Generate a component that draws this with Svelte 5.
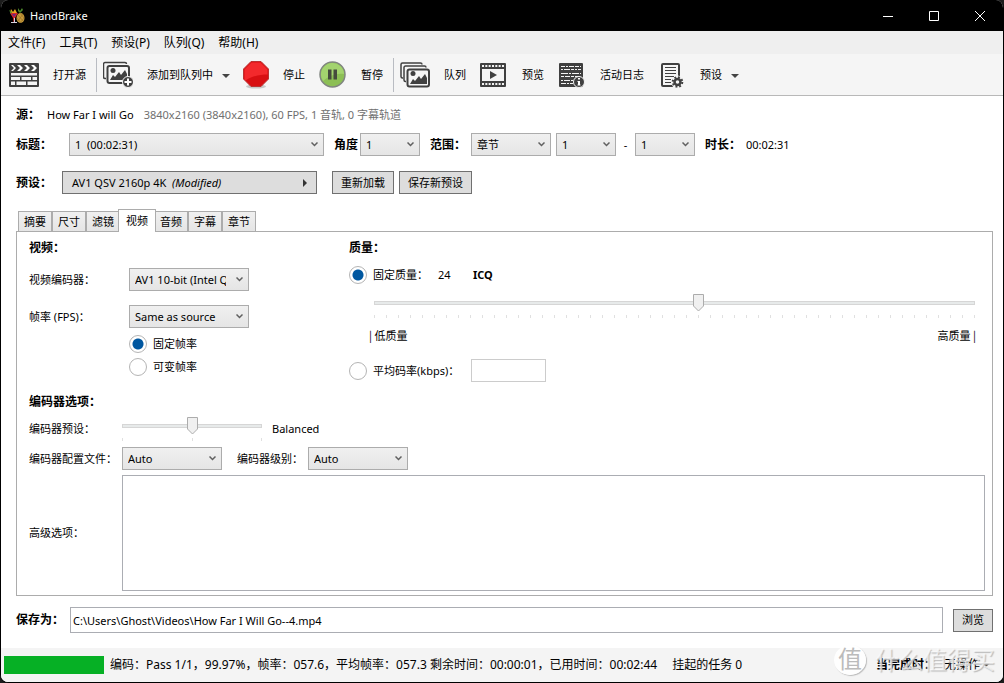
<script>
  const menus = ["文件(F)", "工具(T)", "预设(P)", "队列(Q)", "帮助(H)"];
  const tabs = ["摘要", "尺寸", "滤镜", "视频", "音频", "字幕", "章节"];

  let activeTab = $state("视频");
  let quality = $state(27);
  let speed = $state(1);
  let rateMode = $state("constant");
  let qualityMode = $state("constant");
  let bitrate = $state("");
  let options = $state("");
  let target = $state("C:\\Users\\Ghost\\Videos\\How Far I Will Go--4.mp4");
  let progress = $state(100);
</script>

{#snippet caret()}
  <svg class="caret" width="8" height="4" viewBox="0 0 8 4"><path d="M0 0h8L4 4z" fill="#444" /></svg>
{/snippet}

{#snippet ticks(count)}
  <div class="ticks">
    {#each { length: count } as _, i (i)}<i></i>{/each}
  </div>
{/snippet}

<div class="window">
  <header class="titlebar">
    <svg width="16" height="16" viewBox="0 0 16 16">
      <path d="M1 5h8L6 10 5.500 14H4.500L4 10z" fill="#d5262b" />
      <path d="M1 5 2 1l2 3 2-3 2 4z" fill="#e8a322" />
      <path d="M0 2l3 2-1 2zM9 0l2 3 2-3 1 2-3 3-2-2z" fill="#4d8a2b" />
      <path d="M2 14h6v1H2zM5 10h1v4H5z" fill="#d7d2e0" />
      <path d="M3 6h4L5 9z" fill="#6d2a83" />
      <ellipse cx="11.500" cy="10" rx="4" ry="5" fill="#c79a3a" />
      <path d="M9 7l5 6M8 10l4 5M11 5l4 5M14 6l-5 7M15 10l-4 5" stroke="#8a6522" stroke-width=".5" />
    </svg>
    <h1>HandBrake</h1>
    <button aria-label="最小化"><svg width="10" height="10"><path d="M0 5.500h10" stroke="#fff" /></svg></button>
    <button aria-label="最大化"><svg width="10" height="10"><path d="M.5.500h9v9h-9z" stroke="#fff" fill="none" /></svg></button>
    <button aria-label="关闭"><svg width="10" height="10"><path d="M0 0l10 10M10 0L0 10" stroke="#fff" /></svg></button>
  </header>

  <nav class="menubar">
    {#each menus as menu}<button>{menu}</button>{/each}
  </nav>

  <div class="toolbar">
    <div class="group">
      <button>
        <svg width="30" height="28" viewBox="0 0 30 28">
          <rect y="2" width="30" height="24" rx="1" fill="#404040" />
          <path d="M2 4h2l3 3-3 3H2l3-3zM8 4h3l3 3-3 3H8l3-3zM15 4h3l3 3-3 3h-3l3-3zM22 4h3l3 3-3 3h-3l3-3z" fill="#fff" />
          <path d="M2 12h26v2.500H2zM2 16h9v3H2zM12.500 16H22v3h-9.500zM23.500 16H28v3h-4.500zM2 20.500h4V24H2zM7.500 20.500H17V24H7.500zM18.500 20.500H28V24h-9.500z" fill="#f5f5f5" />
        </svg>
        <span>打开源</span>
      </button>
    </div>
    <div class="group">
      <button>
        <svg width="30" height="28" viewBox="0 0 30 28">
          <path d="M3 17.500H2a1.500 1.500 0 0 1-1.500-1.500V3A1.500 1.500 0 0 1 2 1.500h20A1.500 1.500 0 0 1 23.500 3" fill="none" stroke="#404040" stroke-width="1.500" />
          <rect x="4.500" y="5" width="21.500" height="17" rx="2" fill="#f5f5f5" stroke="#404040" stroke-width="2" />
          <circle cx="10" cy="9.500" r="2.500" fill="#404040" />
          <path d="M7 19l3-5 2 2 4-5 2 3 4-5 2 4v6z" fill="#404040" />
          <circle cx="25" cy="21" r="5.500" fill="#404040" stroke="#f5f5f5" />
          <path d="M25 17.500v7M21.500 21h7" stroke="#fff" stroke-width="2" />
        </svg>
        <span>添加到队列中{@render caret()}</span>
      </button>
      <button>
        <svg width="26" height="28" viewBox="0 0 26 28">
          <ellipse cx="13" cy="25.500" rx="10" ry="2" fill="#aaa" opacity=".6" />
          <path d="M8 .5h10l7.500 7.500v10L18 25.500H8L.5 18V8z" fill="#d80f12" stroke="#b33" />
          <path d="M8.500 1.500h9l7 7v5c-7 0-14 1-22 6l-1-1.500V8.500z" fill="#f3292c" />
        </svg>
        <span>停止</span>
      </button>
      <button>
        <svg width="29" height="28" viewBox="0 0 29 28">
          <circle cx="14.500" cy="13.500" r="12.500" fill="#8cbf55" stroke="#808580" stroke-width="1.500" />
          <path d="M3 14a11.500 11.500 0 0 1 23-1c-9-1-15 2-21 7a11 11 0 0 1-2-6z" fill="#a3d36f" />
          <path d="M10 8.500h3.500v10H10zM15.500 8.500H19v10h-3.500z" fill="#454b3d" />
        </svg>
        <span>暂停</span>
      </button>
    </div>
    <div class="group">
      <button>
        <svg width="30" height="28" viewBox="0 0 30 28">
          <path d="M3 17H2.500A1.500 1.500 0 0 1 1 15.500v-12A1.500 1.500 0 0 1 2.500 2h18A1.500 1.500 0 0 1 22 3.500" fill="none" stroke="#404040" stroke-width="1.500" />
          <path d="M6 20.500h-.5A1.500 1.500 0 0 1 4 19V6.500A1.500 1.500 0 0 1 5.500 5h19A1.500 1.500 0 0 1 26 6.500" fill="none" stroke="#404040" stroke-width="1.500" />
          <rect x="7.500" y="8.500" width="21.500" height="17" rx="2" fill="#f5f5f5" stroke="#404040" stroke-width="2" />
          <circle cx="13" cy="12.500" r="2.500" fill="#404040" />
          <path d="M10 23l3-5 2 2 4-5 2 3 4-5 2 4v6z" fill="#404040" />
        </svg>
        <span>队列</span>
      </button>
      <button>
        <svg width="29" height="28" viewBox="0 0 29 28">
          <rect x="1" y="2" width="26" height="24" rx="1" fill="#404040" />
          <path d="M3 8h22v12H3z" fill="#f5f5f5" />
          <path d="M3 5h22M3 23h22" stroke="#f5f5f5" stroke-width="2" stroke-dasharray="2 1.330" />
          <path d="M11 10l7 4-7 4z" fill="#404040" />
        </svg>
        <span>预览</span>
      </button>
      <button>
        <svg width="29" height="28" viewBox="0 0 29 28">
          <rect x="2" y="2" width="24" height="24" rx="1" fill="#404040" />
          <g stroke="#f5f5f5">
            <path d="M4 5.500h20" stroke-dasharray="4 1 2 1 5 1" />
            <path d="M4 8.500h20" stroke-dasharray="2 1 6 1 3 1" />
            <path d="M4 12.500h20" stroke-dasharray="7 1 2 1" />
            <path d="M4 15.500h20" stroke-dasharray="3 1 5 1" />
            <path d="M4 19.500h12" stroke-dasharray="2 1 6 1" />
            <path d="M4 22.500h12" stroke-dasharray="5 1 2 1" />
          </g>
          <circle cx="22" cy="21" r="5.500" fill="#404040" stroke="#f5f5f5" />
          <path d="M21 17h2v1.500h-2zM20.500 20H23v3.500h.5v1h-3v-1h.5V21h-.5z" fill="#fff" />
        </svg>
        <span>活动日志</span>
      </button>
      <button>
        <svg width="29" height="28" viewBox="0 0 29 28">
          <rect x="5" y="3" width="17" height="22" rx="1" fill="#f5f5f5" stroke="#404040" stroke-width="2" />
          <path d="M8 6.500h11M8 9.500h11M8 12.500h11M8 15.500h9M8 18.500h6M8 21.500h6" stroke="#404040" />
          <circle cx="20.500" cy="21" r="6.500" fill="#f5f5f5" />
          <circle cx="20.500" cy="21" r="3" fill="none" stroke="#404040" stroke-width="2.500" />
          <circle cx="20.500" cy="21" r="4.800" fill="none" stroke="#404040" stroke-width="2" stroke-dasharray="1.880 1.880" />
        </svg>
        <span>预设{@render caret()}</span>
      </button>
    </div>
  </div>

  <main>
    <div class="row source">
      <b>源：</b>
      <span>How Far I will Go</span>
      <span class="muted">3840x2160 (3840x2160), 60 FPS, 1 音轨, 0 字幕轨道</span>
    </div>

    <div class="row title-row">
      <label class="caption" for="title">标题：</label>
      <select id="title" class="wide"><option>1&nbsp; (00:02:31)</option></select>
      <label class="angle" for="angle">角度</label>
      <select id="angle" class="tiny"><option>1</option></select>
      <label class="range" for="range">范围：</label>
      <select id="range" class="short"><option>章节</option></select>
      <select class="tiny gap" aria-label="开始"><option>1</option></select>
      <span class="dash">-</span>
      <select class="tiny" aria-label="结束"><option>1</option></select>
      <b class="duration">时长：</b>
      <span>00:02:31</span>
    </div>

    <div class="row preset-row">
      <b class="caption">预设：</b>
      <button class="push preset">
        <span>AV1 QSV 2160p 4K&nbsp; <em>(Modified)</em></span>
        <svg width="4" height="8" viewBox="0 0 4 8"><path d="M0 0l4 4-4 4z" fill="#333" /></svg>
      </button>
      <button class="push reload">重新加载</button>
      <button class="push">保存新预设</button>
    </div>

    <div class="tabs" role="tablist">
      {#each tabs as tab}
        <button role="tab" aria-selected={tab === activeTab} class:active={tab === activeTab} onclick={() => (activeTab = tab)}>{tab}</button>
      {/each}
    </div>

    <section class="panel" role="tabpanel">
      <div class="columns">
        <div class="video">
          <h2>视频：</h2>
          <div class="field">
            <label for="encoder">视频编码器：</label>
            <select id="encoder"><option>AV1 10-bit (Intel QSV)</option></select>
          </div>
          <div class="field">
            <label for="fps">帧率 (FPS)：</label>
            <select id="fps"><option>Same as source</option></select>
          </div>
          <div class="radios">
            <label class="radio"><input type="radio" bind:group={rateMode} value="constant" />固定帧率</label>
            <label class="radio"><input type="radio" bind:group={rateMode} value="variable" />可变帧率</label>
          </div>
        </div>

        <div class="quality">
          <h2>质量：</h2>
          <div class="row constant">
            <label class="radio"><input type="radio" bind:group={qualityMode} value="constant" />固定质量：</label>
            <span class="rf">24</span>
            <b>ICQ</b>
          </div>
          <div class="slider">
            <input type="range" min="0" max="50" bind:value={quality} aria-label="质量" />
            {@render ticks(51)}
          </div>
          <div class="ends"><span>| 低质量</span><span>高质量 |</span></div>
          <div class="row">
            <label class="radio bitrate"><input type="radio" bind:group={qualityMode} value="average" />平均码率(kbps)：</label>
            <input class="kbps" type="text" bind:value={bitrate} aria-label="平均码率" />
          </div>
        </div>
      </div>

      <h2>编码器选项：</h2>
      <div class="row speed">
        <label class="side" for="speed">编码器预设：</label>
        <div class="slider">
          <input id="speed" type="range" min="0" max="2" bind:value={speed} />
          {@render ticks(3)}
        </div>
        <span>Balanced</span>
      </div>
      <div class="row profile">
        <label class="side" for="profile">编码器配置文件：</label>
        <select id="profile"><option>Auto</option></select>
        <label class="level" for="level">编码器级别：</label>
        <select id="level"><option>Auto</option></select>
      </div>
      <div class="row advanced">
        <label class="side" for="options">高级选项：</label>
        <textarea id="options" bind:value={options}></textarea>
      </div>
    </section>

    <div class="row save">
      <label for="target">保存为：</label>
      <input id="target" type="text" bind:value={target} />
      <button class="push browse">浏览</button>
    </div>
  </main>

  <footer class="status">
    <div class="progress"><div class="bar" style:width="{progress}%"></div></div>
    <span>编码：Pass 1/1，99.97%，帧率：057.6，平均帧率：057.3 剩余时间：00:00:01，已用时间：00:02:44</span>
    <span class="pending">挂起的任务 0</span>
    <b>当完成时：</b>
    <button class="done">无操作{@render caret()}</button>
  </footer>

  <div class="watermark"><span class="seal">值</span><span>什么值得买</span></div>
</div>

<style>
  :global(body) {
    margin: 0;
    background: #1c1c1c;
  }

  .window {
    position: relative;
    display: flex;
    flex-direction: column;
    box-sizing: border-box;
    min-height: 100vh;
    border: 1px solid #000;
    border-top: 0;
    border-radius: 8px;
    overflow: hidden;
    background: #fff;
    color: #000;
    font: 11px/16px "Noto Sans", "Noto Sans CJK SC", sans-serif;
    white-space: nowrap;
  }

  button, select, input, textarea {
    box-sizing: border-box;
    margin: 0;
    font: inherit;
    color: inherit;
    border-radius: 0;
  }

  button {
    padding: 0;
    border: 0;
    background: none;
  }

  svg {
    display: block;
    flex: none;
  }

  h1, h2 {
    margin: 0;
    font-size: 12px;
    line-height: 16px;
  }

  .row {
    display: flex;
    align-items: center;
  }

  .titlebar {
    display: flex;
    align-items: center;
    height: 31px;
    padding-left: 8px;
    background: #000;
    color: #fff;
  }

  .titlebar h1 {
    flex: 1;
    padding-left: 5px;
    font-size: 11px;
    font-weight: normal;
  }

  .titlebar button {
    display: flex;
    align-items: center;
    justify-content: center;
    width: 46px;
    height: 31px;
  }

  .menubar {
    display: flex;
    gap: 14px;
    height: 23px;
    padding-left: 7px;
    background: #efefef;
    font-size: 12px;
  }

  .toolbar {
    display: flex;
    align-items: center;
    height: 41px;
    border-bottom: 1px solid #b8b8b8;
    background: #f5f5f5;
  }

  .group {
    display: flex;
    gap: 13px;
    height: 34px;
    padding: 0 10px 0 6px;
  }

  .group:first-child {
    padding-left: 8px;
  }

  .group + .group {
    border-left: 1px solid #b9bcc2;
  }

  .group button {
    display: flex;
    align-items: center;
    gap: 14px;
  }

  .caret {
    display: inline-block;
    margin-left: 9px;
    vertical-align: middle;
  }

  main {
    flex: 1;
    display: flex;
    flex-direction: column;
    padding: 11px 10px 15px 15px;
  }

  .source b, .title-row label, .title-row b, .caption, .save label {
    font-size: 12px;
    font-weight: bold;
  }

  .source b {
    width: 31px;
  }

  .muted {
    margin-left: 10px;
    color: #707070;
  }

  select {
    appearance: none;
    height: 23px;
    padding: 0 22px 0 5px;
    border: 1px solid #acacac;
    background:
      url("data:image/svg+xml,%3Csvg xmlns='http://www.w3.org/2000/svg' width='7' height='5'%3E%3Cpath d='M.5.500l3 3 3-3' fill='none' stroke='%23606060' stroke-width='1.500'/%3E%3C/svg%3E") no-repeat right 5px top 8px,
      linear-gradient(#f0f0f0, #e5e5e5);
    text-overflow: clip;
  }

  .title-row {
    margin-top: 10px;
  }

  .caption {
    width: 53px;
  }

  .title-row select.wide {
    width: 255px;
  }

  .title-row .angle {
    width: 26px;
    margin-left: 10px;
  }

  .title-row .range {
    width: 41px;
    margin-left: 10px;
  }

  .short {
    width: 80px;
  }

  .tiny {
    width: 60px;
  }

  .gap {
    margin-left: 5px;
  }

  .dash {
    width: 19px;
    text-align: center;
  }

  .title-row .duration {
    width: 41px;
    margin-left: 10px;
  }

  .push {
    height: 23px;
    padding: 0 8px;
    border: 1px solid #707070;
    background: #ddd;
  }

  .preset-row {
    margin-top: 15px;
  }

  .preset-row .caption {
    width: 46px;
  }

  .preset {
    display: flex;
    align-items: center;
    justify-content: space-between;
    width: 255px;
    padding: 0 9px;
  }

  .reload {
    margin: 0 5px 0 15px;
  }

  .tabs {
    display: flex;
    align-items: flex-end;
    margin-top: 15px;
    padding-left: 2px;
  }

  .tabs button {
    width: 34px;
    height: 20px;
    border: 1px solid #acacac;
    border-width: 1px 1px 0 1px;
    background: linear-gradient(#f0f0f0, #e5e5e5);
  }

  .tabs button.active {
    position: relative;
    width: 38px;
    height: 23px;
    margin: 0 -2px -1px -2px;
    background: #fff;
  }

  .panel {
    flex: 1;
    display: flex;
    flex-direction: column;
    padding: 8px 7px 4px 12px;
    border: 1px solid #acacac;
  }

  .columns {
    display: grid;
    grid-template-columns: 320px 1fr;
    height: 154px;
  }

  .field {
    display: flex;
    align-items: center;
    margin-top: 12px;
  }

  .field + .field {
    margin-top: 14px;
  }

  .field label {
    width: 100px;
  }

  .field select {
    width: 120px;
  }

  .radios {
    display: grid;
    gap: 5px;
    margin-top: 7px;
    padding-left: 100px;
  }

  .radio {
    display: flex;
    align-items: center;
    gap: 6px;
  }

  .radio input {
    appearance: none;
    width: 18px;
    height: 18px;
    border: 1px solid #b4b4b4;
    border-radius: 50%;
    background: #fff;
  }

  .radio input:checked {
    background: radial-gradient(circle, #0057a0 5px, #fff 6px);
  }

  .constant {
    margin-top: 10px;
  }

  .constant .radio {
    width: 89px;
  }

  .rf {
    width: 35px;
  }

  .quality .slider {
    margin: 10px 10px 0 25px;
  }

  .slider input {
    appearance: none;
    display: block;
    width: 100%;
    height: 18px;
    background: linear-gradient(#e7eaea, #e7eaea) center / calc(100% - 2px) 2px no-repeat,
      linear-gradient(#d6d6d6, #d6d6d6) center / 100% 4px no-repeat;
  }

  .slider input::-webkit-slider-thumb {
    appearance: none;
    width: 11px;
    height: 18px;
    background: url("data:image/svg+xml,%3Csvg xmlns='http://www.w3.org/2000/svg' width='11' height='18'%3E%3Cpath d='M.5.500h10v11.500l-5 5-5-5z' fill='%23f0f0f0' stroke='%23acacac'/%3E%3C/svg%3E");
  }

  .ticks {
    display: flex;
    justify-content: space-between;
    margin-top: 3px;
  }

  .ticks i {
    width: 1px;
    height: 3px;
    background: #e0e0e0;
  }

  .ends {
    display: flex;
    justify-content: space-between;
    margin: 9px 9px 16px 20px;
    font-family: "Noto Sans CJK SC", sans-serif;
  }

  .bitrate {
    width: 122px;
  }

  .kbps {
    width: 75px;
    height: 23px;
    border: 1px solid #ccc;
  }

  .side {
    width: 93px;
  }

  .speed {
    margin-top: 7px;
  }

  .speed .slider {
    width: 140px;
    margin-right: 10px;
  }

  .profile {
    margin-top: 6px;
  }

  .profile select {
    width: 100px;
  }

  .level {
    width: 71px;
    margin-left: 15px;
  }

  .advanced {
    flex: 1;
    margin-top: 5px;
  }

  textarea {
    flex: 1;
    align-self: stretch;
    border: 1px solid #abadb3;
    resize: none;
  }

  .save {
    margin-top: 11px;
  }

  .save label {
    width: 54px;
  }

  .save input {
    flex: 1;
    height: 26px;
    padding: 0 2px;
    border: 1px solid #abadb3;
  }

  .browse {
    width: 40px;
    margin-left: 10px;
  }

  .status {
    display: flex;
    align-items: center;
    height: 34px;
    padding: 0 13px 0 3px;
    background: #f4f4f4;
    font-size: 12px;
  }

  .progress {
    width: 100px;
    height: 18px;
    margin-right: 6px;
  }

  .bar {
    height: 100%;
    background: #06b025;
  }

  .pending {
    flex: 1;
    margin-left: 15px;
  }

  .done {
    display: flex;
    align-items: center;
    margin-left: 8px;
  }

  .done .caret {
    margin-left: 2px;
  }

  .watermark {
    position: absolute;
    right: 8px;
    bottom: 6px;
    display: flex;
    align-items: center;
    gap: 9px;
    color: rgba(255, 255, 255, 0.6);
    font-size: 24px;
    line-height: 32px;
    text-shadow: 1px 1px 1px #bbb;
    pointer-events: none;
  }

  .seal {
    width: 32px;
    height: 30px;
    border-radius: 50%;
    background: rgba(255, 255, 255, 0.9);
    box-shadow: 1px 1px 1px #bbb;
    color: #bbb;
    line-height: 28px;
    text-align: center;
    text-shadow: none;
  }
</style>
